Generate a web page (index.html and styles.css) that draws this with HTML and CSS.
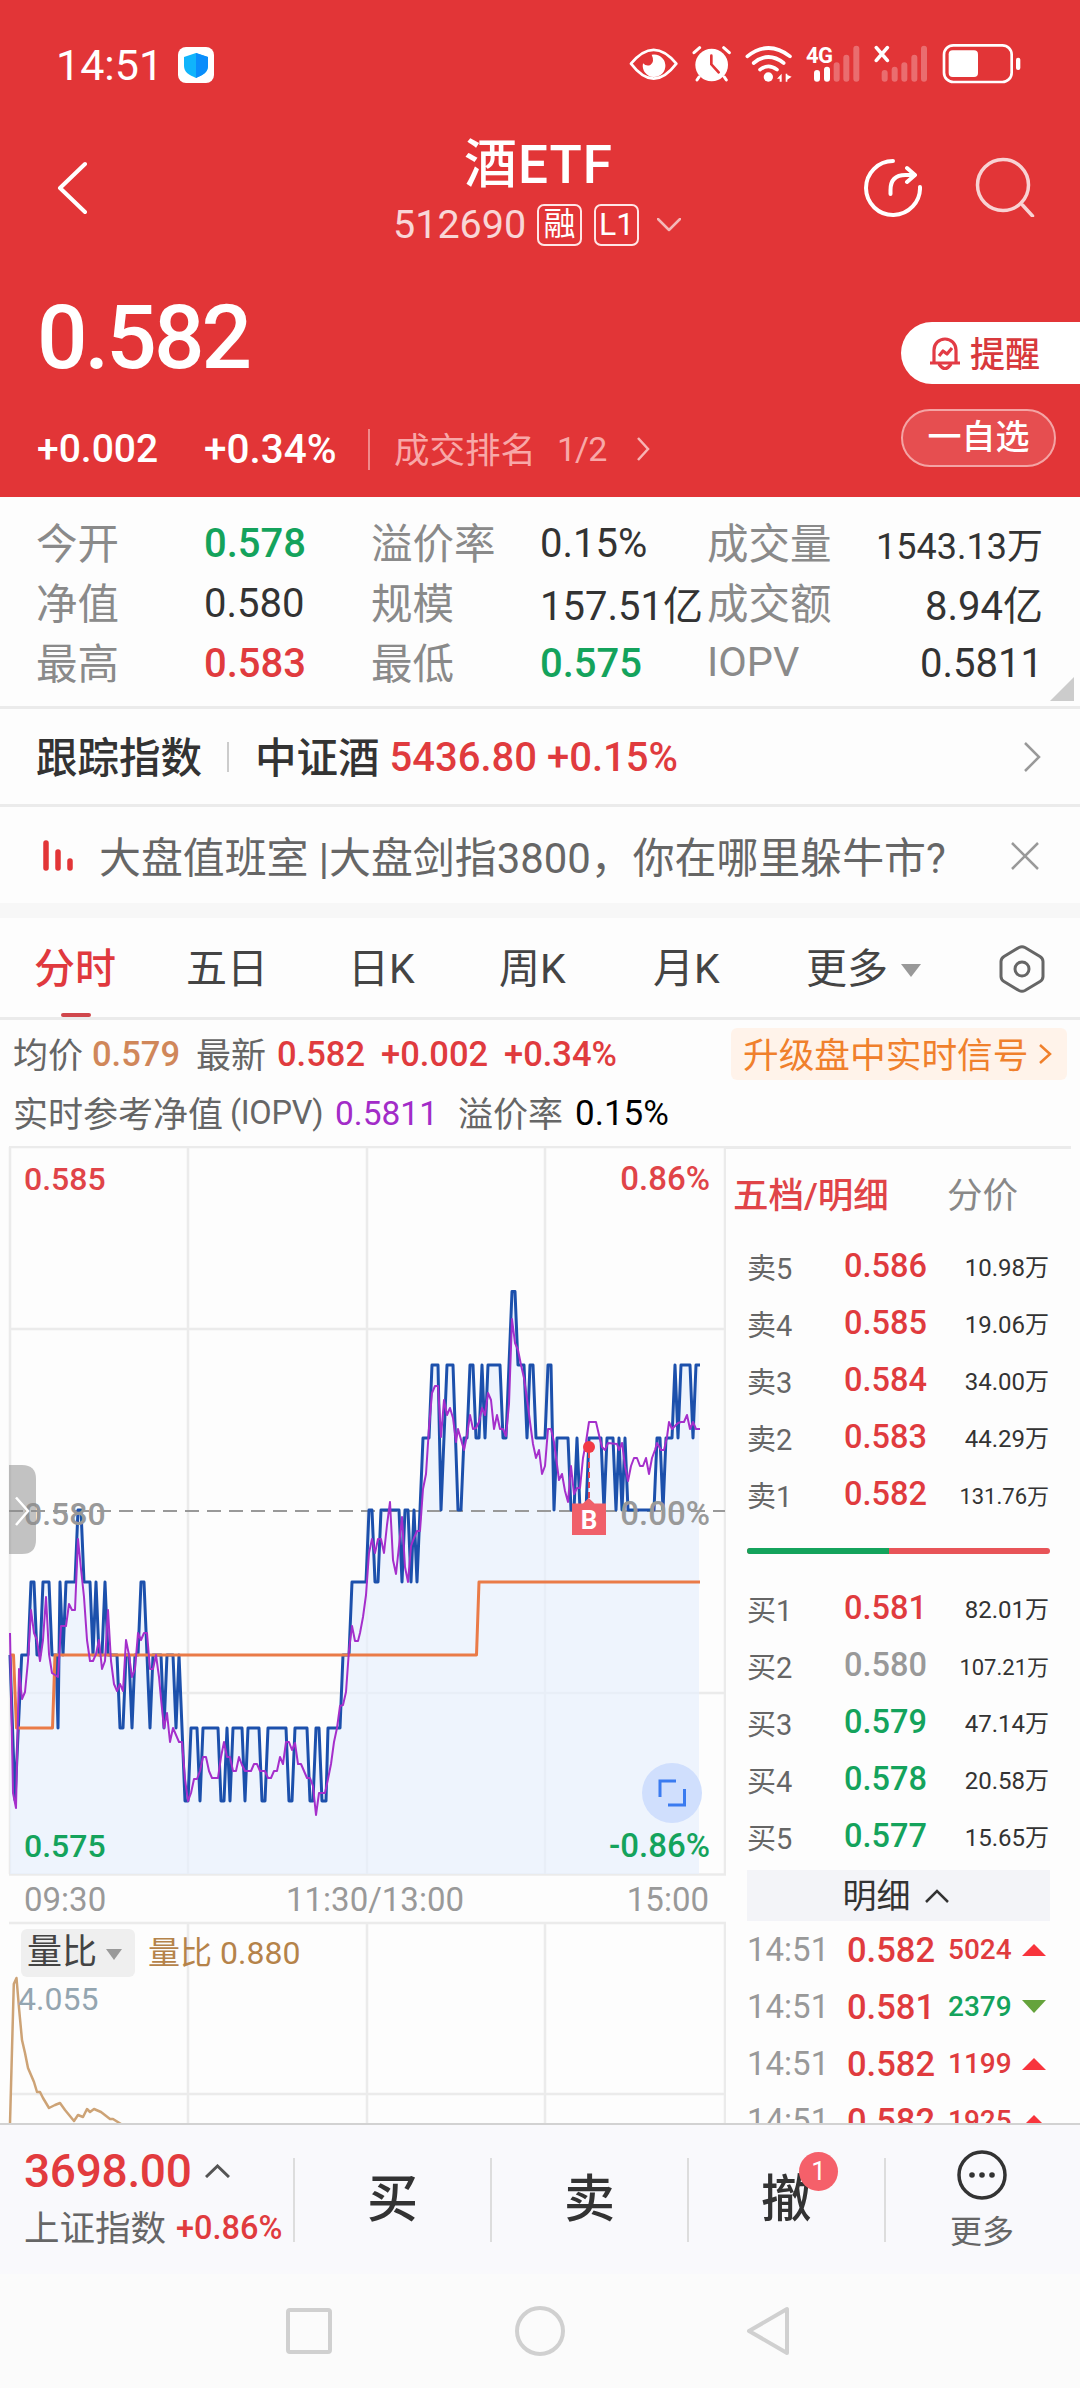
FILE: index.html
```html
<!DOCTYPE html>
<html lang="zh-CN">
<head>
<meta charset="utf-8">
<title>酒ETF 512690</title>
<link rel="stylesheet" href="styles.css">
</head>
<body>
<header class="hero">
  <div class="status">
    <span class="clock">14:51</span>
    <svg class="shield" viewBox="0 0 36 36"><rect width="36" height="36" rx="8" fill="#fff"/><path d="M18 6l12 4v9c0 6-5 9-12 12C11 28 6 25 6 19v-9z" fill="#10b4fb"/><path d="M18 6l12 4v9c0 6-5 9-12 12z" fill="#0a8dfb"/></svg>
    <div class="status-icons">
      <svg width="49" height="41" viewBox="30 70 147 123" fill="none"><path d="M36 132Q104 49 172 132Q104 222 36 132Z" stroke="#fff" stroke-width="8" stroke-linejoin="round"/><path d="M98 105a34 34 0 1 1-26 26q10 10 22 5q14-10 4-31z" fill="#fff"/></svg>
      <svg width="39" height="41" viewBox="219 70 117 123" fill="none" stroke="#fff" stroke-width="9" stroke-linecap="round"><circle cx="278" cy="136" r="49" fill="#fff" stroke="none"/><path d="M225 99l17-15M331 99l-17-15M240 172l-6 9M316 172l6 9"/><path d="M277 108v26l22 24" stroke="#e23537" stroke-width="8"/></svg>
      <svg width="47" height="41" viewBox="378 70 141 123" fill="none" stroke="#fff" stroke-width="11" stroke-linecap="round"><path d="M385 110Q448 60 513 110M404 130Q448 94 494 130M423 150Q448 130 474 150"/><circle cx="448" cy="172" r="14" fill="#fff" stroke="none"/><path d="M488 162v24h-6v-9h-8zM500 162v24h5v-6l13-9-13-5v-4z" fill="#fff" stroke="none"/></svg>
      <svg width="54" height="41" viewBox="562 70 162 123" stroke="#fff" stroke-width="18" stroke-linecap="round"><text class="net" x="562" y="131" stroke="none">4G</text><path d="M595 160v17M625 150v27"/><path d="M654 137v40M683 114v63M713 87v90" opacity=".28"/></svg>
      <svg width="54" height="41" viewBox="766 70 162 123" stroke="#fff" stroke-width="18" stroke-linecap="round"><path d="M773 84l33 38M806 84l-33 38" stroke-width="11"/><path d="M798 160v17M828 150v27M857 137v40M887 114v63M916 87v90" opacity=".28"/></svg>
      <svg width="79" height="41" viewBox="967 70 237 123" fill="none"><rect x="973" y="77" width="203" height="110" rx="28" stroke="#fff" stroke-width="8"/><rect x="987" y="92" width="88" height="80" rx="12" fill="#fff"/><rect x="1189" y="114" width="13" height="37" rx="6" fill="#fff"/></svg>
    </div>
  </div>

  <div class="titlebar">
    <svg class="back" width="30" height="54" viewBox="0 0 30 54"><path d="M28 3L3 27l25 24"/></svg>
    <div class="title">
      <h1>酒ETF</h1>
      <div class="code"><span>512690</span><b class="box">融</b><b class="box">L1</b>
        <svg width="24" height="14" viewBox="0 0 24 14"><path d="M1 1l11 11L23 1"/></svg></div>
    </div>
    <svg class="tool" width="60" height="60" viewBox="864 158 60 60"><path d="M895 161a27 27 0 1 0 27 26M892.500 194v-4q0-15 15-15h8M909 168l8 7-8 7"/></svg>
    <svg class="tool soft" width="60" height="60" viewBox="977 157 60 60"><circle cx="1005" cy="185" r="25.500"/><path d="M1024.500 205l10 11"/></svg>
  </div>

  <div class="quote">
    <div class="quote-main">
      <div class="price">0.582</div>
      <div class="change"><span>+0.002</span><span>+0.34%</span><i></i><em>成交排名</em><em>1/2</em>
        <svg width="13" height="24" viewBox="0 0 13 24"><path d="M1 1l10 11L1 23"/></svg></div>
    </div>
    <div class="actions">
      <div class="remind"><svg width="34" height="36" viewBox="0 0 34 36"><path d="M6 27V15a11 11 0 0 1 22 0v12M2 28h30M11 29q6 9 12 0M11 21l4-5 4 3 5-6"/></svg><span class="cjk">提醒</span></div>
      <div class="fav">一自选</div>
    </div>
  </div>
</header>

<section class="stats">
  <span>今开</span><b class="dn">0.578</b><span>溢价率</span><b>0.15%</b><span>成交量</span><b class="end small">1543.13万</b>
  <span>净值</span><b>0.580</b><span>规模</span><b>157.51亿</b><span>成交额</span><b class="end">8.94亿</b>
  <span>最高</span><b class="up">0.583</b><span>最低</span><b class="dn">0.575</b><span>IOPV</span><b class="end">0.5811</b>
  <i class="corner"></i>
</section>

<section class="index-row">
  <span class="cjk">跟踪指数</span><i></i><span class="cjk">中证酒</span><b class="up">5436.80 +0.15%</b>
  <svg width="17" height="30" viewBox="0 0 17 30"><path d="M1 1l14 14L1 29"/></svg>
</section>

<section class="notice">
  <svg width="32" height="32" viewBox="0 0 32 32"><path d="M3 3v25M15 12v16M27 21v7" stroke="#e23537" stroke-width="5.500" stroke-linecap="round"/></svg>
  <p>大盘值班室 |大盘剑指3800，你在哪里躲牛市?</p>
  <svg class="close" width="28" height="28" viewBox="0 0 28 28"><path d="M1 1l26 26M27 1L1 27"/></svg>
</section>

<nav class="tabs">
  <span class="on">分时</span><span>五日</span><span>日K</span><span>周K</span><span>月K</span><span>更多<i></i></span>
  <svg width="46" height="50" viewBox="0 0 46 50"><path d="M20 3.500q3-1.500 6 0l15 9q3 2 3 5v15q0 3-3 5l-15 9q-3 1.500-6 0l-15-9q-3-2-3-5v-15q0-3 3-5z"/><circle cx="23" cy="25" r="7"/></svg>
</nav>

<section class="info">
  <div class="line avg"><span class="cjk">均价</span><b class="tan">0.579</b><span class="cjk">最新</span><b class="up">0.582</b><b class="up">+0.002</b><b class="up">+0.34%</b>
    <a class="upgrade"><span class="cjk">升级盘中实时信号</span><svg width="14" height="20" viewBox="0 0 14 20"><path d="M2 1l10 9-10 9"/></svg></a></div>
  <div class="line iopv"><span class="cjk">实时参考净值</span><span class="paren">(IOPV)</span><b class="violet">0.5811</b><span class="cjk">溢价率</span><b class="ink">0.15%</b></div>
</section>

<main class="board">
  <svg class="chart" width="726" height="977" viewBox="0 1146 726 977">
    <g class="grid">
      <path d="M9 1147H726M10 1329H725M10 1693H725M9 1874.500H726M9 1923H726M10 2094H725"/>
      <path d="M10 1147V1874M188 1147V1874M367 1147V1874M545 1147V1874M725 1147V1874M188 1923V2123M367 1923V2123M545 1923V2123M725 1923V2123"/>
    </g>
    <path class="area" d="M10 1655L15 1800L21.700 1655H28L31 1582H34L37 1655H40L43 1582H49L52 1655H56L58 1728L60 1582L63 1655L66 1582H75L78 1510H81L84 1582H90L93 1655L96 1582L99 1655H102L105 1582L108 1655H117L120 1728H123L126 1655H129L132 1728L135 1655H138L141 1582H144L147 1655L150 1728L153 1655H161L164 1728L167 1655H173L176 1728L179 1655L182 1728L185 1801H188L191 1728H197L200 1801L203 1728H218L221 1801H224L227 1728L230 1801L233 1728H242L245 1801L248 1728H259L262 1801H265L268 1728H286L289 1801H292L295 1728H307L310 1801H313L316 1728H319L322 1801H326L328 1728H340L343 1655H349L352 1582H366L369 1510H372L375 1582H378L381 1510H399L402 1582L405 1510H408L411 1582L414 1510L417 1582L423 1438H429L432 1365H438L441 1510L447 1365H453L458 1510H461L464 1438H467L470 1365H473L476 1438H479L482 1365L485 1438L488 1365H500L503 1438H506L512 1291.500H515L518 1365H524L527 1438L530 1365H533L536 1438H545L548 1365H551L554 1510L557 1438H568L571 1510H574L577 1438L580 1510H586L589 1438H601L604 1510L607 1438H613L616 1510L619 1438L622 1510L625 1438L628 1510H654L657 1438H660L663 1510L666 1438H672L675 1365L678 1438L681 1365H690L693 1438L696 1365H699V1874H10Z"/>
    <path class="ref" d="M9 1511H725"/>
    <path class="blue" d="M10 1655L15 1800L21.700 1655H28L31 1582H34L37 1655H40L43 1582H49L52 1655H56L58 1728L60 1582L63 1655L66 1582H75L78 1510H81L84 1582H90L93 1655L96 1582L99 1655H102L105 1582L108 1655H117L120 1728H123L126 1655H129L132 1728L135 1655H138L141 1582H144L147 1655L150 1728L153 1655H161L164 1728L167 1655H173L176 1728L179 1655L182 1728L185 1801H188L191 1728H197L200 1801L203 1728H218L221 1801H224L227 1728L230 1801L233 1728H242L245 1801L248 1728H259L262 1801H265L268 1728H286L289 1801H292L295 1728H307L310 1801H313L316 1728H319L322 1801H326L328 1728H340L343 1655H349L352 1582H366L369 1510H372L375 1582H378L381 1510H399L402 1582L405 1510H408L411 1582L414 1510L417 1582L423 1438H429L432 1365H438L441 1510L447 1365H453L458 1510H461L464 1438H467L470 1365H473L476 1438H479L482 1365L485 1438L488 1365H500L503 1438H506L512 1291.500H515L518 1365H524L527 1438L530 1365H533L536 1438H545L548 1365H551L554 1510L557 1438H568L571 1510H574L577 1438L580 1510H586L589 1438H601L604 1510L607 1438H613L616 1510L619 1438L622 1510L625 1438L628 1510H654L657 1438H660L663 1510L666 1438H672L675 1365L678 1438L681 1365H690L693 1438L696 1365H700"/>
    <path class="orange" d="M10 1655H13.500L16.500 1728H52.500L55 1655H476.500L479 1582H700"/>
    <polyline class="purple" points="10,1633 13,1793 16,1808 19,1669 22,1699 25,1692 28,1661 31,1610 34,1633 37,1640 40,1661 43,1640 46,1597 49,1654 52,1673 58,1677 61,1626 66,1626 69,1604 72,1610 75,1610 78,1539 81,1569 84,1597 87,1640 90,1661 93,1661 96,1654 99,1640 102,1669 105,1661 108,1610 111,1661 114,1684 117,1691 120,1684 123,1691 126,1640 129,1655 132,1677 135,1669 138,1633 141,1640 144,1633 147,1633 150,1669 153,1669 156,1655 159,1677 161,1699 164,1728 167,1713 170,1742 173,1728 179,1742 182,1742 185,1779 188,1801 191,1793 194,1779 197,1779 200,1771 203,1757 206,1757 209,1771 212,1778 218,1778 221,1757 224,1742 227,1757 230,1757 233,1771 236,1771 239,1757 242,1765 245,1771 251,1771 254,1764 257,1764 260,1771 265,1771 268,1778 271,1778 274,1771 277,1771 280,1757 283,1764 286,1742 289,1742 292,1750 295,1743 298,1764 301,1764 304,1771 307,1778 310,1778 313,1786 316,1815 319,1793 325,1793 328,1779 331,1764 334,1742 337,1728 340,1706 343,1705 346,1692 349,1650 352,1626 355,1641 358,1641 360,1633 363,1617 366,1595 369,1553 372,1539 375,1553 378,1539 381,1539 384,1553 387,1525 390,1502 393,1560 396,1574 399,1546 402,1517 405,1567 408,1582 411,1546 414,1538 417,1531 420,1531 423,1489 426,1474 429,1428 432,1393 435,1386 438,1386 441,1437 444,1400 447,1415 450,1408 453,1418 456,1442 458,1429 464,1450 467,1435 470,1415 473,1429 476,1428 479,1422 482,1408 485,1415 488,1393 491,1400 494,1429 497,1415 500,1429 503,1429 506,1436 509,1404 512,1319 515,1343 518,1350 521,1365 524,1378 527,1399 530,1422 533,1444 536,1458 539,1450 542,1474 545,1466 548,1429 551,1429 554,1442 559,1480 562,1474 565,1491 568,1502 571,1466 574,1494 577,1488 580,1488 583,1458 586,1442 589,1422 596,1422 599,1435 602,1447 605,1450 608,1443 617,1444 619,1450 622,1443 625,1466 628,1481 631,1466 634,1458 637,1458 640,1466 643,1466 646,1458 649,1474 652,1458 655,1450 657,1443 661,1450 664,1450 667,1437 669,1422 672,1429 678,1423 681,1422 684,1422 687,1415 690,1429 693,1422 696,1429 700,1429"/>
    <g class="lbl">
      <text x="24" y="1190" class="f-up">0.585</text>
      <text x="710" y="1190" class="f-up end pct">0.86%</text>
      <text x="24" y="1525" class="f-mute">0.580</text>
      <text x="710" y="1525" class="f-mute end pct">0.00%</text>
      <text x="24" y="1857" class="f-dn">0.575</text>
      <text x="710" y="1857" class="f-dn end pct">-0.86%</text>
    </g>
    <path class="pin-line" d="M589 1452V1500"/>
    <circle cx="589" cy="1447" r="6" fill="#f23a45"/>
    <path d="M572 1503.500H583L588.700 1498L594.500 1503.500H606V1535H572Z" fill="#f0606a"/>
    <text class="pin" x="589" y="1529">B</text>
    <circle cx="672" cy="1793" r="30" fill="#d0dffd"/>
    <path class="expand" d="M660 1797V1781H676M684.500 1789V1805H668"/>
    <path d="M9 1465H22Q36 1465 36 1479V1540Q36 1554 22 1554H9Z" fill="#8c8c8c" opacity=".52"/>
    <path d="M16 1497.500L28 1511L16 1525" fill="none" stroke="#fff" stroke-width="2.500"/>
    <g class="axis">
      <text x="24" y="1911">09:30</text><text x="375" y="1911" class="mid">11:30/13:00</text><text x="709" y="1911" class="end">15:00</text>
    </g>
    <polyline class="ratio" points="10,2123 13.800,1984 16.500,1978 19,2008 22,2040 25,2053 28,2068 31,2075 34,2082 37,2092 40,2092 43,2098 49,2108 55,2105 60,2103 65,2110 74,2121 78,2115 83,2117 87,2109 90,2112 94,2109 101,2112 110,2119 113,2119 121,2124"/>
    <rect x="21" y="1929" width="114" height="48" rx="6" fill="#efefef"/>
    <text class="chip" x="27" y="1964">量比</text>
    <path d="M106 1949H122L114 1960Z" fill="#999"/>
    <text class="ratio-t" x="148" y="1964">量比</text><text class="ratio-t" x="220" y="1964">0.880</text>
    <text class="ratio-max" x="18" y="2010">4.055</text>
  </svg>

  <aside class="side">
    <div class="side-tabs"><span class="on">五档/明细</span><span>分价</span></div>
    <div class="lv"><span>卖5</span><b class="up">0.586</b><em>10.98万</em></div>
    <div class="lv"><span>卖4</span><b class="up">0.585</b><em>19.06万</em></div>
    <div class="lv"><span>卖3</span><b class="up">0.584</b><em>34.00万</em></div>
    <div class="lv"><span>卖2</span><b class="up">0.583</b><em>44.29万</em></div>
    <div class="lv"><span>卖1</span><b class="up">0.582</b><em class="tight">131.76万</em></div>
    <div class="ratio-bar"><i></i></div>
    <div class="lv"><span>买1</span><b class="up">0.581</b><em>82.01万</em></div>
    <div class="lv"><span>买2</span><b class="flat">0.580</b><em class="tight">107.21万</em></div>
    <div class="lv"><span>买3</span><b class="dn">0.579</b><em>47.14万</em></div>
    <div class="lv"><span>买4</span><b class="dn">0.578</b><em>20.58万</em></div>
    <div class="lv"><span>买5</span><b class="dn">0.577</b><em>15.65万</em></div>
    <div class="detail"><span class="cjk">明细</span><svg width="24" height="14" viewBox="0 0 24 14"><path d="M1 13L12 2l11 11"/></svg></div>
    <div class="tick"><span>14:51</span><b>0.582</b><em>5024</em><i></i></div>
    <div class="tick sell"><span>14:51</span><b>0.581</b><em>2379</em><i></i></div>
    <div class="tick"><span>14:51</span><b>0.582</b><em>1199</em><i></i></div>
    <div class="tick"><span>14:51</span><b>0.582</b><em>1925</em><i></i></div>
  </aside>
</main>

<footer class="trade">
  <div class="market">
    <div class="m1">3698.00<svg width="25" height="14" viewBox="0 0 25 14"><path d="M1 13L12.500 2 24 13"/></svg></div>
    <div class="m2"><span class="cjk">上证指数</span><b>+0.86%</b></div>
  </div>
  <div class="act">买</div>
  <div class="act">卖</div>
  <div class="act"><span class="cancel">撤<i class="badge">1</i></span></div>
  <div class="more">
    <svg width="52" height="52" viewBox="0 0 52 52"><circle cx="26" cy="26" r="23" fill="none" stroke="#333" stroke-width="3.500"/><g fill="#333"><circle cx="16" cy="26" r="2.800"/><circle cx="26" cy="26" r="2.800"/><circle cx="36" cy="26" r="2.800"/></g></svg>
    <span>更多</span>
  </div>
</footer>

<div class="sysnav">
  <svg width="46" height="50" viewBox="0 0 46 50"><rect x="2" y="4" width="42" height="42" rx="2"/></svg>
  <svg width="50" height="50" viewBox="0 0 50 50"><circle cx="25" cy="25" r="23"/></svg>
  <svg width="46" height="50" viewBox="0 0 46 50"><path d="M3 25L41 3v44z"/></svg>
</div>
</body>
</html>
```

FILE: styles.css
```css
* { box-sizing: border-box; }
body {
  margin: 0;
  width: 1080px;
  height: 2388px;
  overflow: hidden;
  display: flex;
  flex-direction: column;
  background: #fdfdfd;
  color: #333;
  font-family: Roboto, "Noto Sans CJK SC", sans-serif;
  white-space: nowrap;
}
b, em, i, h1 { font-weight: inherit; font-style: normal; margin: 0; }
svg { display: block; flex: none; }
/* lifts Chinese labels to the optical centre of the digits beside them */
.cjk { padding-bottom: 4px; }
.up { color: #e03b3e; }
.dn { color: #14a35c; }
.flat { color: #999; }
.tan { color: #d0875a; }
.violet { color: #a22cc8; }
.ink { color: #000; }

/* header */
.hero { height: 497px; flex: none; background: #e23537; color: #fff; }
.status { height: 130px; padding: 0 59px 0 56px; display: flex; align-items: center; }
.clock { width: 122px; font-size: 43px; line-height: 50px; }
.shield { width: 36px; height: 36px; }
.status-icons { margin-left: auto; margin-top: -4px; display: flex; gap: 14px; }
.net { font: 700 66px Roboto, sans-serif; fill: #fff; letter-spacing: -2px; }
.titlebar { height: 120px; padding: 0 45px 0 57px; display: flex; align-items: center; }
.titlebar svg { fill: none; stroke: #fff; stroke-linecap: round; stroke-linejoin: round; }
.back { stroke-width: 4; margin-top: -5px; }
.title { width: 292px; margin-left: 306px; margin-right: 177px; padding-top: 5px; display: flex; flex-direction: column; }
.title h1 { font-size: 53px; font-weight: 500; line-height: 64px; padding-left: 71px; letter-spacing: 1px; }
.code { height: 56px; display: flex; align-items: center; gap: 12px; font-size: 39.500px; }
.code > span { width: 132px; opacity: .8; }
.box { width: 45px; height: 42px; border: 2px solid #ffe6e6; border-radius: 7px; font-size: 32px; line-height: 37px; text-align: center; }
.code svg { margin-left: 6px; stroke-width: 2.500; opacity: .65; }
.tool { stroke-width: 4; margin-top: -4px; }
.tool.soft { margin-left: 53px; opacity: .78; margin-top: -6px; }
.titlebar .soft { stroke-width: 3.500; }
.quote { height: 247px; display: flex; justify-content: space-between; }
.quote-main { padding-left: 37px; }
.price { height: 140px; padding-top: 36px; font-size: 89px; font-weight: 500; line-height: 104px; letter-spacing: -3px; }
.change { height: 116px; padding-top: 2px; display: flex; align-items: center; font-size: 39px; font-weight: 500; }
.change span { width: 167px; }
.change span + span { width: 164px; font-size: 40.500px; }
.change i { width: 2px; height: 41px; background: #f08a8a; margin-right: 24px; }
.change em { width: 163px; padding-bottom: 3px; font-size: 35.500px; font-weight: 400; color: #f8a8a8; }
.change em + em { width: 80px; padding-bottom: 0; font-size: 34px; letter-spacing: -1px; }
.change svg { fill: none; stroke: #f8b4b4; stroke-width: 2.500; }
.actions { width: 179px; padding-top: 72px; }
.remind { height: 62px; border-radius: 31px 0 0 31px; background: #fff; color: #d8393c; display: flex; align-items: center; gap: 8px; padding-left: 27px; font-size: 35px; font-weight: 500; }
.remind svg { fill: none; stroke: #e23b45; stroke-width: 3.200; stroke-linejoin: round; }
.fav { width: 155px; height: 58px; margin-top: 25px; border: 2px solid #f4a4a4; border-radius: 29px; background: #e64e50; font-size: 34px; font-weight: 500; line-height: 53px; text-align: center; }

/* key figures */
.stats { position: relative; height: 212px; flex: none; padding: 16px 37px 0; display: grid; grid-template-columns: 167px 168px 168px 168px 151px 184px; grid-auto-rows: 60px; align-items: center; font-size: 40px; border-bottom: 3px solid #ebebeb; }
.stats span { font-size: 41.500px; color: #8a8a8a; margin-left: -1px; padding-bottom: 4px; }
.stats .up, .stats .dn { font-weight: 500; }
.stats .end { text-align: right; }
.stats .small { font-size: 36px; }
.corner { position: absolute; right: 6px; bottom: 5px; border-left: 24px solid transparent; border-bottom: 24px solid #ccc; }
.index-row { height: 98px; flex: none; padding: 0 39px 0 36px; display: flex; align-items: center; font-size: 41.500px; font-weight: 500; border-bottom: 3px solid #ebebeb; }
.index-row i { width: 2px; height: 30px; background: #ccc; margin: 0 26px 0 25px; }
.index-row b { font-size: 40px; margin: 2px 0 0 10px; }
.index-row svg { margin-left: auto; fill: none; stroke: #999; stroke-width: 2.500; }
.notice { height: 96px; flex: none; padding: 2px 41px 0 43px; display: flex; align-items: center; font-size: 41.900px; color: #666; }
.notice p { margin: 0 0 0 24px; padding-bottom: 4px; }
.close { margin-left: auto; fill: none; stroke: #999; stroke-width: 2.500; }

/* period tabs */
.tabs { height: 117px; flex: none; border-top: 15px solid #f7f7f7; border-bottom: 3px solid #ebebeb; padding: 4px 35px 0 34px; display: grid; grid-template-columns: 152px 162px 151px 154px 153px 193px 46px; align-items: center; font-size: 41px; color: #444; }
.tabs span { position: relative; line-height: 95px; }
.tabs .on { color: #e0393e; font-weight: 500; }
.tabs .on::after { content: ""; position: absolute; left: 27px; bottom: 0; width: 30px; height: 4px; border-radius: 2px; background: #d0474c; }
.tabs i { display: inline-block; margin-left: 13px; vertical-align: 6px; border: 10.500px solid transparent; border-top: 13px solid #999; border-bottom: 0; }
.tabs svg { fill: none; stroke: #666; stroke-width: 3; margin-top: -2px; }

/* averages */
.info { height: 126px; flex: none; padding: 4px 13px 0 13px; }
.line { display: grid; align-items: center; height: 60px; font-size: 35px; color: #666; }
.avg { grid-template-columns: 79px 104px 81px 104px 123px 227px 336px; }
.avg b { font-weight: 500; font-size: 34.500px; }
.iopv { grid-template-columns: 217px 105px 123px 117px 1fr; height: 58px; }
.iopv .violet { font-size: 33.500px; }
.paren { font-size: 32.500px; letter-spacing: -.3px; }
.upgrade { height: 52px; border-radius: 6px; background: #fff3ea; color: #f0802c; display: flex; align-items: center; padding-left: 12px; font-size: 35.700px; gap: 9px; }
.upgrade svg { fill: none; stroke: #f0802c; stroke-width: 2.500; }

/* chart */
.board { height: 977px; flex: none; display: flex; overflow: hidden; }
.chart text { font-family: Roboto, "Noto Sans CJK SC", sans-serif; }
.grid { fill: none; stroke: #ebebeb; stroke-width: 2.500; }
.area { fill: #e6effd; opacity: .65; }
.ref { stroke: #999; stroke-width: 2; stroke-dasharray: 14 8; }
.blue, .orange, .purple, .ratio { fill: none; stroke-linejoin: round; }
.blue { stroke: #1c50ac; stroke-width: 3; }
.orange { stroke: #ea7b48; stroke-width: 3; }
.purple { stroke: #a52fcb; stroke-width: 2; }
.ratio { stroke: #cda376; stroke-width: 2.500; }
.lbl { font-size: 32px; font-weight: 500; }
.pct { font-size: 33px; }
.axis { font-size: 33px; fill: #999; }
.end { text-anchor: end; }
.mid { text-anchor: middle; }
.f-up { fill: #e04448; }
.f-dn { fill: #14a35c; }
.f-mute { fill: #999; }
.pin-line { stroke: #e64550; stroke-width: 2; stroke-dasharray: 6 4; }
.pin { font-size: 26px; font-weight: 700; fill: #fff; text-anchor: middle; }
.expand { fill: none; stroke: #3a7bf0; stroke-width: 3; }
.chip { font-size: 35px; fill: #444; }
.ratio-t { font-size: 32px; fill: #b5834a; }
.ratio-max { font-size: 32px; fill: #94a5b0; }

/* order book */
.side { width: 345px; padding: 0 20px 0 21px; border-top: 3px solid #ebebeb; }
.side-tabs { height: 88px; margin-left: -14px; padding: 0 33px 2px 0; display: flex; justify-content: space-between; align-items: center; font-size: 35.500px; color: #888; }
.side-tabs .on { color: #e04448; font-weight: 500; }
.lv { height: 57px; display: grid; grid-template-columns: 97px 1fr auto; align-items: center; padding: 0 2px 0 0; font-size: 29px; color: #666; }
.lv b { font-size: 32.500px; font-weight: 500; }
.lv em { font-size: 24px; color: #333; }
.lv .tight { font-size: 22px; }
.ratio-bar { height: 6px; margin: 26px 1px 25px 0; border-radius: 3px; background: #e85458; overflow: hidden; }
.ratio-bar i { display: block; width: 47%; height: 6px; background: #14a35c; }
.detail { height: 51px; margin: 6px 1px 0 0; padding-right: 6px; background: #f3f4f8; display: flex; align-items: center; justify-content: center; gap: 14px; font-size: 34px; }
.detail svg { fill: none; stroke: #333; stroke-width: 2.500; }
.tick { height: 57px; display: grid; grid-template-columns: 100px 101px 74px 24px; align-items: center; font-size: 33px; color: #e03b3e; }
.tick span { color: #999; }
.tick b { font-size: 34.500px; font-weight: 500; }
.tick em { font-size: 28px; font-weight: 500; }
.tick i { border: 12px solid transparent; border-bottom: 12px solid #f8343c; border-top: 0; }
.sell em { color: #14a35c; }
.tick.sell i { border-top: 13px solid #65a33c; border-bottom: 0; }

/* trade bar */
.trade { height: 151px; flex: none; border-top: 2px solid #d2d2d2; background: #f9f9fc; display: flex; align-items: center; }
.market { width: 293px; height: 116px; padding-left: 24px; display: flex; flex-direction: column; }
.m1 { height: 58px; display: flex; align-items: center; gap: 13px; font-size: 46px; font-weight: 500; letter-spacing: -.3px; color: #e23b3e; }
.m1 svg { fill: none; stroke: #555; stroke-width: 3; }
.m2 { height: 56px; display: flex; align-items: center; gap: 10px; font-size: 35.500px; color: #666; }
.m2 b { font-size: 32.500px; font-weight: 500; color: #e03b3e; }
.act { width: 197px; height: 84px; border-left: 2px solid #ddd; display: flex; align-items: center; justify-content: center; font-size: 51px; font-weight: 500; line-height: 84px; }
.cancel { position: relative; }
.badge { position: absolute; left: 38px; top: -6px; width: 39px; height: 39px; border-radius: 50%; background: #f5606a; color: #fff; font-size: 26px; font-weight: 400; line-height: 39px; text-align: center; }
.more { width: 194px; height: 84px; border-left: 2px solid #ddd; display: flex; flex-direction: column; align-items: center; justify-content: center; gap: 8px; font-size: 32px; line-height: 46px; color: #666; }
.more svg { margin-top: 4px; }

/* system navigation */
.sysnav { height: 114px; background: #fbfbfb; display: flex; align-items: center; padding-left: 286px; gap: 183px; }
.sysnav svg { fill: none; stroke: #d0d0d0; stroke-width: 4; stroke-linejoin: round; }
.sysnav svg:last-child { margin-left: -2px; }
```
